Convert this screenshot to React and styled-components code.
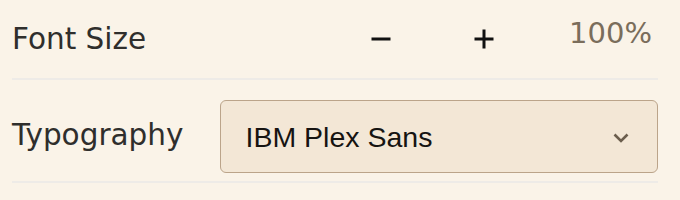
import React from "react";
import styled, { createGlobalStyle } from "styled-components";

const Global = createGlobalStyle`
  html, body { margin: 0; padding: 0; background: #faf3e8; }
  body { font-family: "DejaVu Sans", Verdana, sans-serif; }
`;

const Panel = styled.div`
  width: 680px;
  height: 200px;
  box-sizing: border-box;
  padding: 0 22px 0 12px;
  background: #faf3e8;
`;

const Row = styled.div`
  display: flex;
  align-items: center;
  box-sizing: border-box;
  height: ${(p) => p.$h}px;
  padding: ${(p) => p.$pad};
  border-bottom: 2px solid #eeebe7;
`;

const Label = styled.div`
  font-family: "DejaVu Sans", Verdana, sans-serif;
  font-size: 29.5px;
  color: #2f2e2c;
  width: ${(p) => p.$w || "auto"};
  flex: ${(p) => (p.$w ? "none" : "1")};
  margin-bottom: ${(p) => p.$mb || 0}px;
`;

const StepButton = styled.button`
  display: flex;
  align-items: center;
  justify-content: center;
  width: 40px;
  height: 40px;
  padding: 0;
  border: none;
  background: transparent;
  margin-right: ${(p) => p.$mr}px;
  cursor: pointer;
`;

const Value = styled.div`
  font-family: "DejaVu Sans", sans-serif;
  font-size: 29px;
  color: #7a6d5b;
  align-self: flex-start;
  margin-top: 15.5px;
  margin-right: 6px;
`;

const Select = styled.div`
  flex: 1;
  display: flex;
  align-items: center;
  justify-content: space-between;
  box-sizing: border-box;
  height: 73px;
  padding: 2px 28.5px 0 25px;
  background: #f3e7d6;
  border: 1.5px solid #bba48a;
  border-radius: 6px;
  font-family: "Liberation Sans", Arial, sans-serif;
  font-size: 28.5px;
  color: #161412;
`;

const Minus = () => (
  <svg width="20" height="20" viewBox="0 0 20 20">
    <rect x="0.5" y="8.5" width="19" height="3" fill="#111" />
  </svg>
);

const Plus = () => (
  <svg width="20" height="20" viewBox="0 0 20 20">
    <rect x="0.5" y="8.5" width="19" height="3" fill="#111" />
    <rect x="8.5" y="0.5" width="3" height="19" fill="#111" />
  </svg>
);

const Chevron = () => (
  <svg width="16" height="10" viewBox="0 0 16 10">
    <path d="M1.5 1.5 L8 8 L14.5 1.5" fill="none" stroke="#6b5e4d" strokeWidth="2.6" />
  </svg>
);

export default function App() {
  return (
    <>
      <Global />
      <Panel>
        <Row $h={80} $pad="0">
          <Label>Font Size</Label>
          <StepButton $mr={62.5} aria-label="Decrease">
            <Minus />
          </StepButton>
          <StepButton $mr={65.5} aria-label="Increase">
            <Plus />
          </StepButton>
          <Value>100%</Value>
        </Row>
        <Row $h={103} $pad="20px 0 8px">
          <Label $w="207.5px" $mb={4}>Typography</Label>
          <Select>
            <span>IBM Plex Sans</span>
            <Chevron />
          </Select>
        </Row>
      </Panel>
    </>
  );
}
